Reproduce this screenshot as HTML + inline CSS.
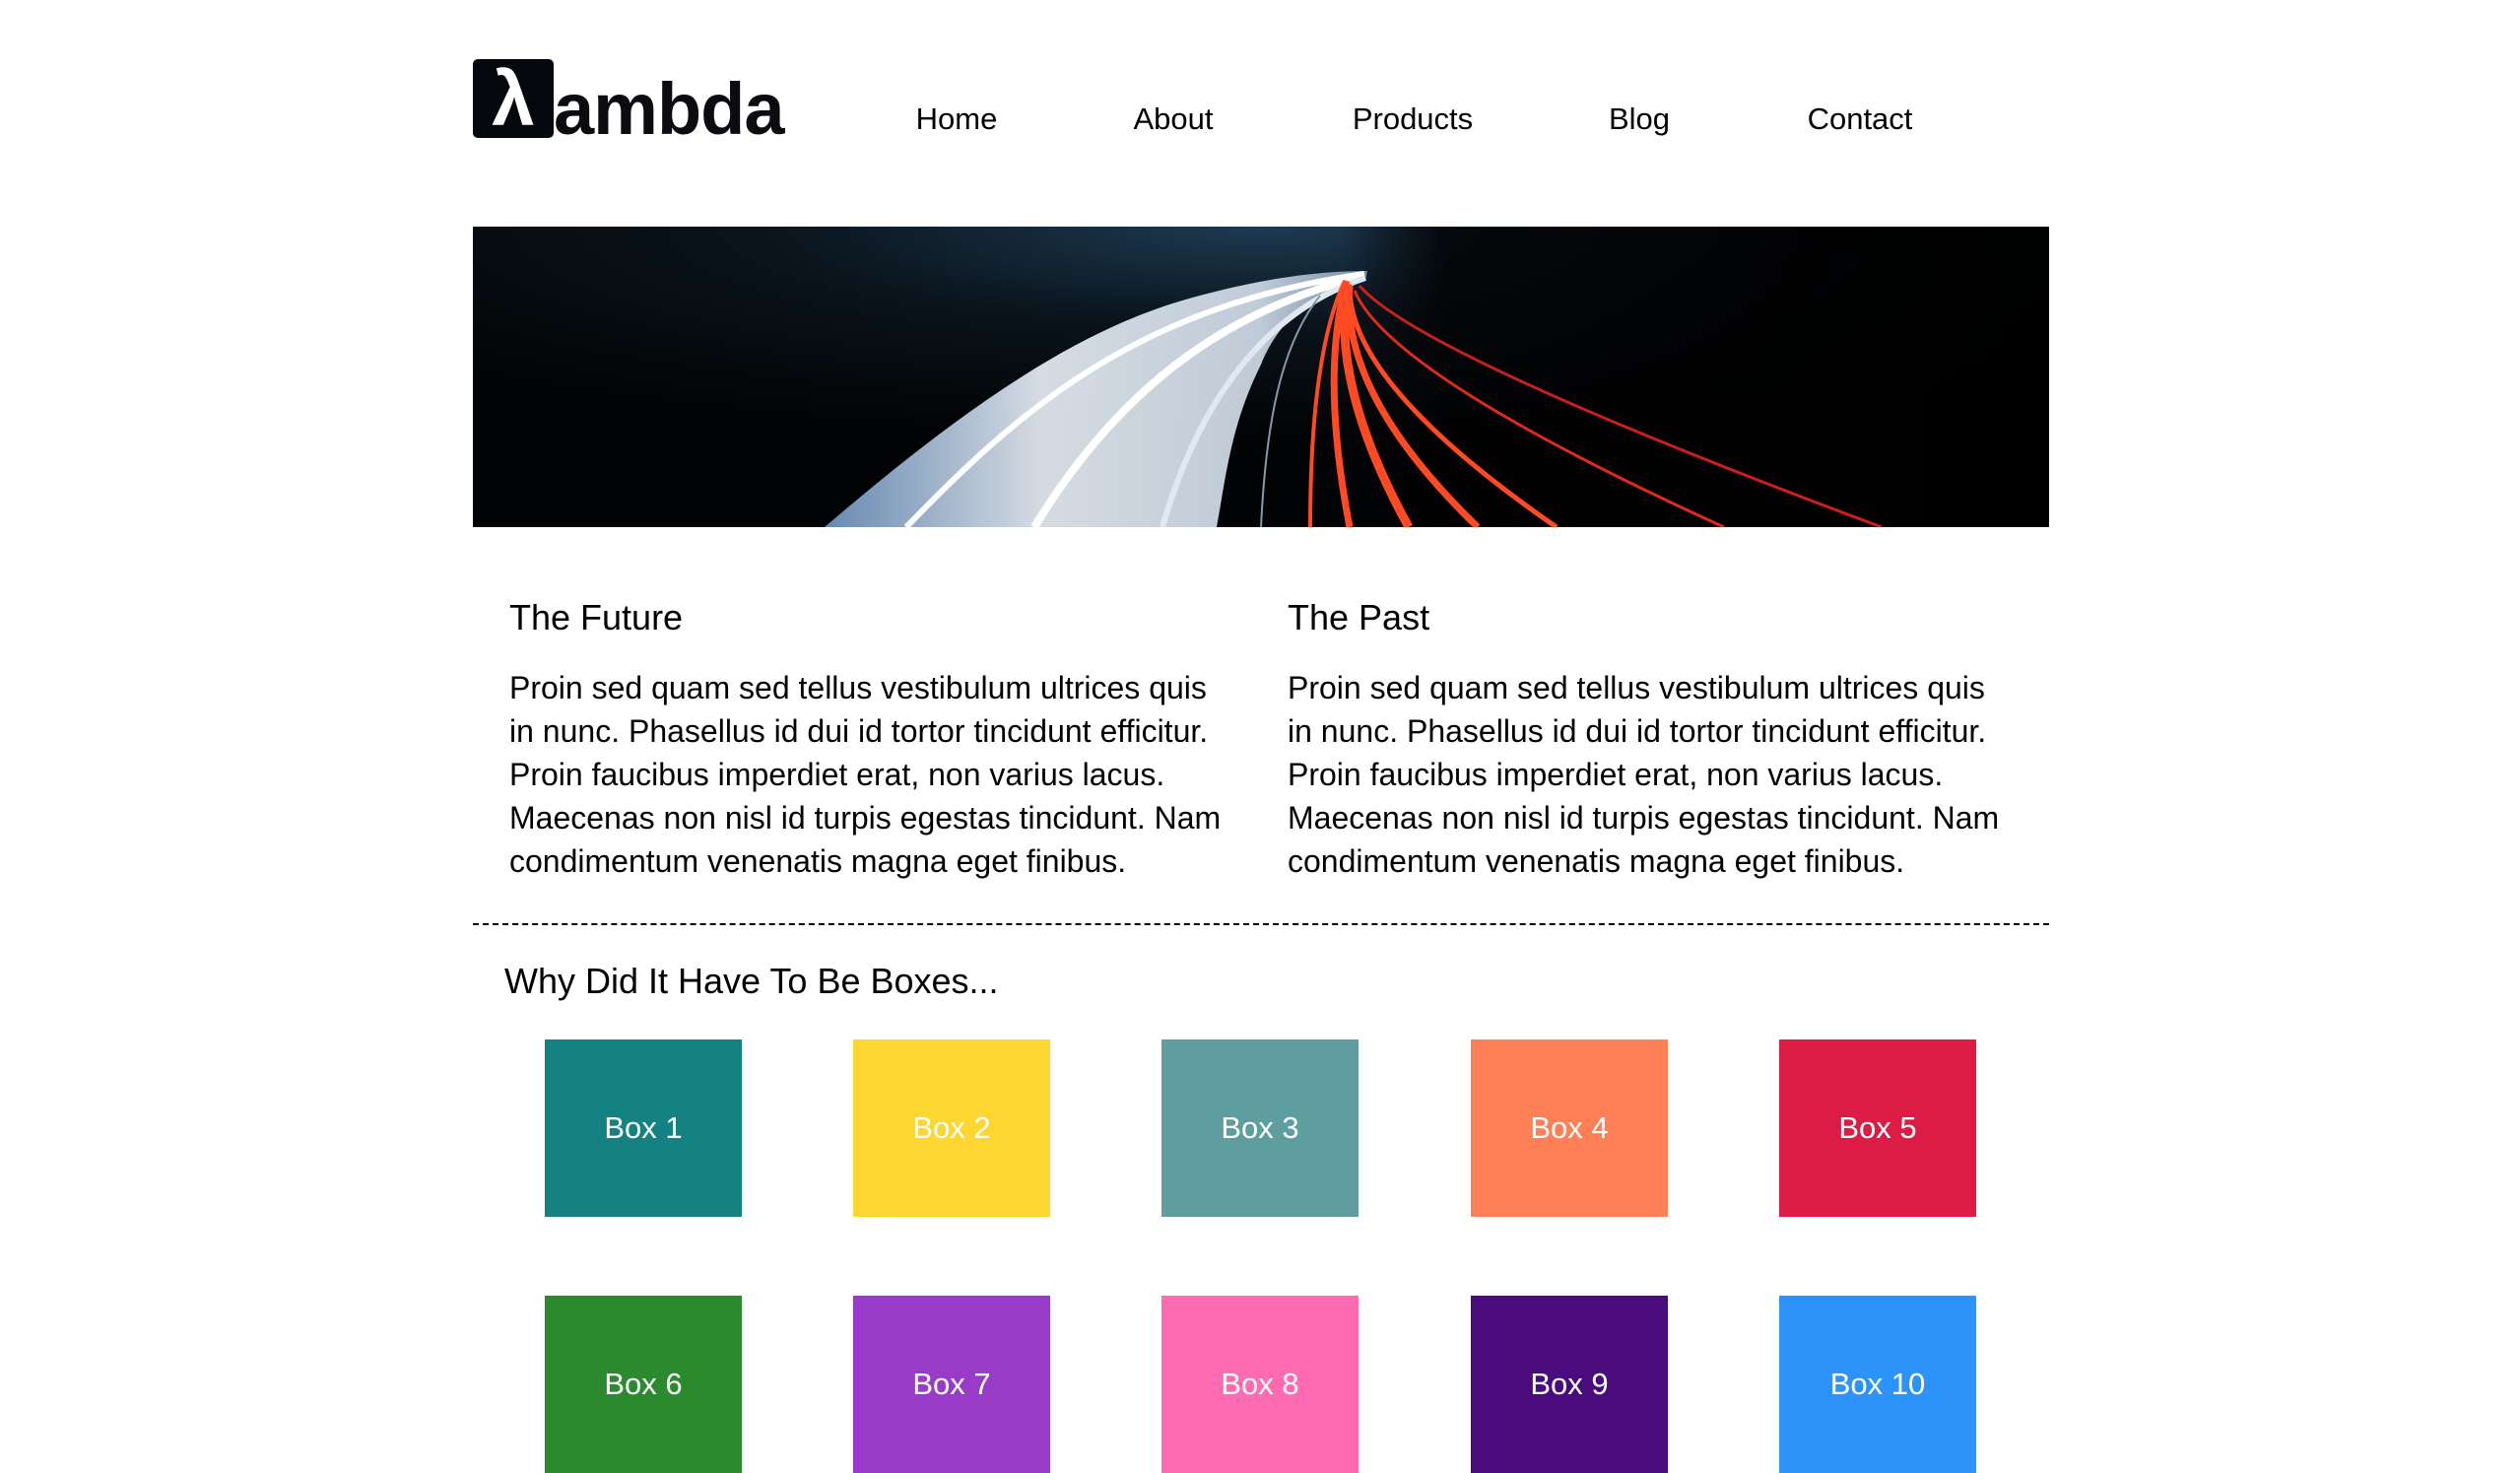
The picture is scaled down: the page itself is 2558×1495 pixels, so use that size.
<!DOCTYPE html>
<html><head><meta charset="utf-8"><style>
html,body{margin:0;padding:0;background:#fff;width:2558px;height:1426px;overflow:hidden;font-family:"Liberation Sans",Arial,sans-serif;color:#000}
.abs{position:absolute}
.nav{position:absolute;top:103px;font-size:31px;transform:translateX(-50%)}
h2{position:absolute;margin:0;font-weight:normal;font-size:36px}
p{position:absolute;margin:0;font-size:32px;line-height:44px;white-space:nowrap}
.box{position:absolute;width:200px;height:180px;color:#fff;font-size:31px;display:flex;align-items:center;justify-content:center}
</style></head><body>
<div class="abs" style="left:480px;top:60px;width:82px;height:80px;background:#05080d;border-radius:5px;color:#fff;font-size:78px;font-weight:bold;line-height:80px;text-align:center">λ</div>
<div class="abs" style="left:562px;top:66px;font-size:74px;font-weight:bold;letter-spacing:-1px;line-height:90px;color:#0a0c10">ambda</div>
<div class="nav" style="left:971px">Home</div>
<div class="nav" style="left:1191px">About</div>
<div class="nav" style="left:1434px">Products</div>
<div class="nav" style="left:1664px">Blog</div>
<div class="nav" style="left:1888px">Contact</div>

<svg class="abs" style="left:480px;top:230px" width="1600" height="305" viewBox="0 0 1600 305" preserveAspectRatio="none">
<defs>
<radialGradient id="bg" cx="0.5" cy="0" r="0.7"><stop offset="0" stop-color="#1d3a52"/><stop offset="0.45" stop-color="#0a141c"/><stop offset="1" stop-color="#020304"/></radialGradient>
<linearGradient id="wh" x1="0" y1="0" x2="1" y2="0"><stop offset="0" stop-color="#6f95c0"/><stop offset="0.4" stop-color="#e8eef6"/><stop offset="0.8" stop-color="#cfdbe8"/><stop offset="1" stop-color="#7d93b0"/></linearGradient>
<linearGradient id="dk" x1="0" y1="0" x2="1" y2="0"><stop offset="0" stop-color="#020203" stop-opacity="0"/><stop offset="0.15" stop-color="#020203" stop-opacity="0.85"/><stop offset="1" stop-color="#000" stop-opacity="0.95"/></linearGradient>
</defs>
<rect width="1600" height="305" fill="url(#bg)"/>
<rect x="880" y="0" width="720" height="305" fill="url(#dk)"/>
<path d="M357 305 C480 200 600 110 720 75 C800 52 860 45 908 45 L906 55 C860 62 820 90 800 140 C770 200 765 250 755 305 Z" fill="url(#wh)" opacity="0.92"/>
<path d="M440 305 C560 180 680 80 905 48" stroke="#fff" stroke-width="6" fill="none"/>
<path d="M570 305 C640 190 740 90 905 50" stroke="#fff" stroke-width="8" fill="none"/>
<path d="M700 305 C730 200 790 90 906 52" stroke="#e0e8f0" stroke-width="6" fill="none"/>
<g fill="none" stroke="#ff4a24">
<path d="M850 305 Q850 130 885 55" stroke-width="4"/>
<path d="M890 305 Q860 150 887 55" stroke-width="7"/>
<path d="M950 305 Q870 160 888 58" stroke-width="9"/>
<path d="M1020 305 Q880 170 890 60" stroke-width="7"/>
<path d="M1100 305 Q890 160 890 62" stroke-width="5"/>
<path d="M1270 305 Q930 150 895 65" stroke-width="3" stroke="#e02a1a"/>
<path d="M1430 305 Q960 130 900 60" stroke-width="3" stroke="#c8201a"/>
</g>
<path d="M800 305 C805 200 820 120 860 70" stroke="#8898a8" stroke-width="2" fill="none"/>
</svg>

<h2 style="left:517px;top:606px">The Future</h2>
<h2 style="left:1307px;top:606px">The Past</h2>
<p style="left:517px;top:676px">Proin sed quam sed tellus vestibulum ultrices quis<br>in nunc. Phasellus id dui id tortor tincidunt efficitur.<br>Proin faucibus imperdiet erat, non varius lacus.<br>Maecenas non nisl id turpis egestas tincidunt. Nam<br>condimentum venenatis magna eget finibus.</p>
<p style="left:1307px;top:676px">Proin sed quam sed tellus vestibulum ultrices quis<br>in nunc. Phasellus id dui id tortor tincidunt efficitur.<br>Proin faucibus imperdiet erat, non varius lacus.<br>Maecenas non nisl id turpis egestas tincidunt. Nam<br>condimentum venenatis magna eget finibus.</p>
<div class="abs" style="left:480px;top:937px;width:1600px;border-top:2px dashed #000"></div>
<h2 style="left:512px;top:975px">Why Did It Have To Be Boxes...</h2>

<div class="box" style="left:553px;top:1055px;background:#138280">Box 1</div>
<div class="box" style="left:866px;top:1055px;background:#FDD631">Box 2</div>
<div class="box" style="left:1179px;top:1055px;background:#5F9EA0">Box 3</div>
<div class="box" style="left:1493px;top:1055px;background:#FF7F57">Box 4</div>
<div class="box" style="left:1806px;top:1055px;background:#DC1C44">Box 5</div>
<div class="box" style="left:553px;top:1315px;background:#2B8A2E">Box 6</div>
<div class="box" style="left:866px;top:1315px;background:#993BC9">Box 7</div>
<div class="box" style="left:1179px;top:1315px;background:#FF6BB3">Box 8</div>
<div class="box" style="left:1493px;top:1315px;background:#4A0C7C">Box 9</div>
<div class="box" style="left:1806px;top:1315px;background:#2B93FA">Box 10</div>
</body></html>
